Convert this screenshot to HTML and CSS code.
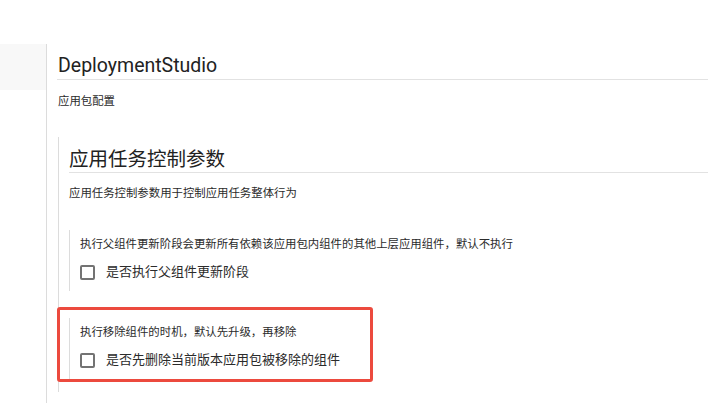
FILE: index.html
```html
<!DOCTYPE html>
<html lang="zh-CN">
<head>
<meta charset="utf-8">
<title>DeploymentStudio</title>
<link rel="stylesheet" href="styles.css">
</head>
<body>
<div class="page">
  <div class="side"></div>
  <div class="main">
    <h1 class="title">DeploymentStudio</h1>
    <p class="subtitle">应用包配置</p>
    <section class="section">
      <h2 class="section-title">应用任务控制参数</h2>
      <p class="desc">应用任务控制参数用于控制应用任务整体行为</p>
      <div class="group">
        <p class="hint">执行父组件更新阶段会更新所有依赖该应用包内组件的其他上层应用组件，默认不执行</p>
        <label class="check-row"><span class="box"></span><span class="label">是否执行父组件更新阶段</span></label>
      </div>
      <div class="group group-second">
        <p class="hint">执行移除组件的时机，默认先升级，再移除</p>
        <label class="check-row"><span class="box"></span><span class="label">是否先删除当前版本应用包被移除的组件</span></label>
        <div class="highlight"></div>
      </div>
    </section>
  </div>
</div>
</body>
</html>
```
FILE: styles.css
```css
html, body {
  margin: 0;
  padding: 0;
  background: #ffffff;
}
body {
  font-family: Roboto, "Noto Sans CJK SC", sans-serif;
  color: #2b2b2b;
  width: 708px;
  height: 403px;
  overflow: hidden;
}
.page {
  display: flex;
  padding-top: 44px;
  height: 359px;
}
.side {
  width: 46px;
  height: 46px;
  background: #f8f8f8;
  flex: none;
}
.main {
  flex: 1;
  border-left: 1px solid #dcdcdc;
  padding-left: 11px;
}
.title {
  margin: 10px 0 0 -1px;
  padding: 0 0 1px 1px;
  font-size: 19.5px;
  line-height: 24px;
  font-weight: 400;
  color: #222;
  border-bottom: 1px solid #e2e2e2;
}
.subtitle {
  margin: 13px 0 0;
  font-size: 11.4px;
  line-height: 16px;
}
.section {
  margin-top: 28px;
  border-left: 1px solid #dcdcdc;
  padding-left: 10px;
  padding-bottom: 13px;
}
.section-title {
  margin: 0;
  padding-top: 11px;
  padding-bottom: 0;
  font-size: 19.5px;
  line-height: 24px;
  font-weight: 400;
  color: #222;
  border-bottom: 1px solid #e2e2e2;
}
.desc {
  margin: 12px 0 0;
  font-size: 11.4px;
  line-height: 16px;
}
.group {
  position: relative;
  margin-top: 29px;
  border-left: 1px solid #dcdcdc;
  padding: 6px 0 9px 10px;
}
.group-second {
  margin-top: 27px;
}
.hint {
  margin: 0;
  font-size: 11.4px;
  line-height: 16px;
}
.check-row {
  display: flex;
  align-items: center;
  margin-top: 10px;
  height: 20px;
}
.box {
  width: 15px;
  height: 15px;
  box-sizing: border-box;
  border: 2px solid #737373;
  border-radius: 2px;
  flex: none;
}
.label {
  margin-left: 11px;
  font-size: 13px;
  line-height: 20px;
}
.highlight {
  position: absolute;
  left: -13px;
  top: -11px;
  width: 316px;
  height: 75px;
  box-sizing: border-box;
  border: 3px solid #ec4a3e;
  border-radius: 3px;
}
```
